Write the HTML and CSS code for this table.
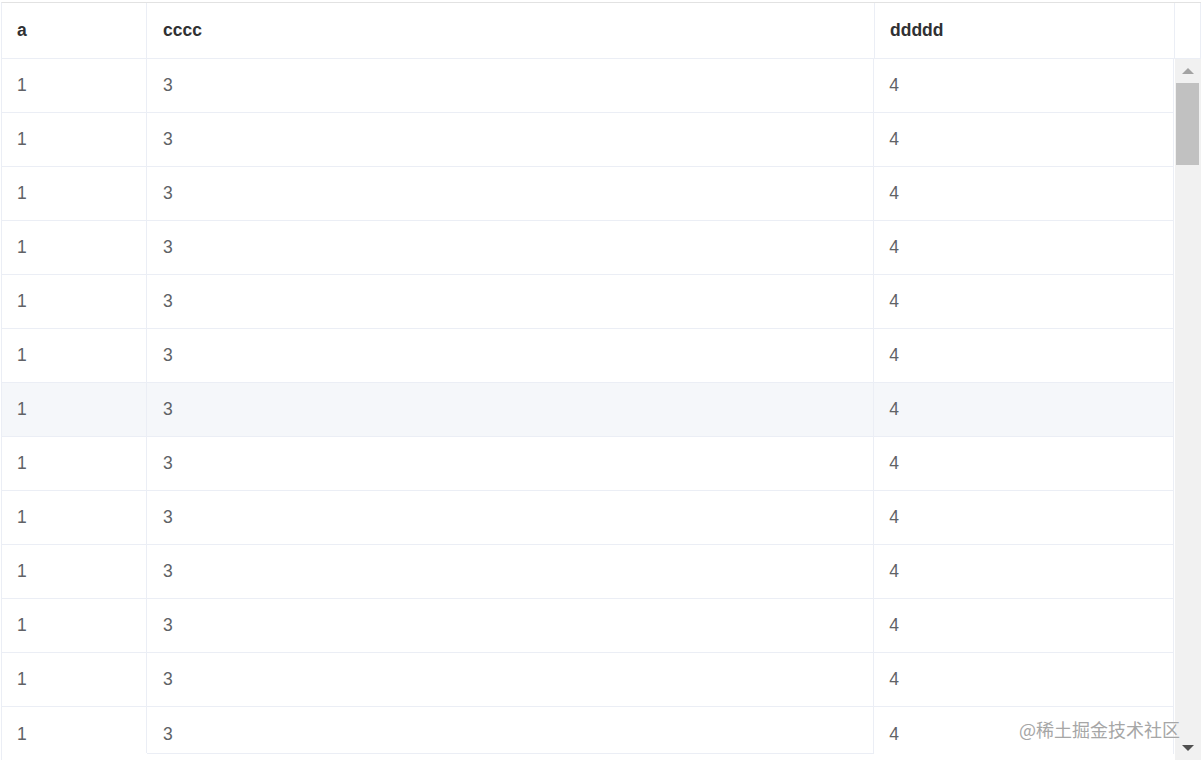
FILE: index.html
```html
<!DOCTYPE html>
<html lang="zh-CN">
<head>
  <meta charset="UTF-8">
  <title>Table</title>
  <link rel="stylesheet" href="styles.css">
</head>
<body>
  <div class="table">
    <div class="thead">
      <div class="th col-a">a</div>
      <div class="th col-c">cccc</div>
      <div class="th col-d">ddddd</div>
      <div class="th gutter"></div>
    </div>
    <div class="tbody-wrap">
      <div id="rows" class="rows"></div>
      <div class="scrollbar">
        <div class="sb-btn"><span class="arrow-up"></span></div>
        <div class="sb-track"><div class="sb-thumb"></div></div>
        <div class="sb-btn"><span class="arrow-down"></span></div>
      </div>
    </div>
  </div>
  <div class="watermark">@稀土掘金技术社区</div>
  <script>
    var html = '';
    for (var i = 0; i < 13; i++) {
      var cls = i === 6 ? 'tr hover' : 'tr';
      html += '<div class="' + cls + '"><div class="td col-a">1</div><div class="td col-c">3</div><div class="td col-d">4</div></div>';
    }
    document.getElementById('rows').innerHTML = html;
  </script>
</body>
</html>
```

FILE: styles.css
```css
html, body { margin: 0; background: #fff; overflow: hidden; }
body {
  font-family: "Liberation Sans", Arial, sans-serif;
  font-size: 17.5px;
  height: 760px;
}
.table {
  margin: 2px 0 0 1px;
  width: 1200px;
  border-top: 1px solid #e2e2e2;
  border-left: 1px solid #ebeef5;
  box-sizing: border-box;
}
.thead, .tr { display: flex; }
.th, .td {
  box-sizing: border-box;
  border-right: 1px solid #ebeef5;
  border-bottom: 1px solid #ebeef5;
  display: flex;
  align-items: center;
  padding-left: 15px;
}
.th { height: 56px; color: #303133; font-weight: bold; }
.td { height: 54px; color: #606266; }
.col-a { width: 145px; }
.col-c { width: 728px; padding-left: 16px; }
.col-d { width: 300px; }
.gutter { width: 26px; padding: 0; }
.tr.hover .td { background: #f5f7fa; }
.tbody-wrap {
  display: flex;
  height: 701px;
}
.rows {
  width: 1173px;
  overflow: hidden;
}
.rows .tr:last-child .td {
  height: 47px;
  align-items: flex-start;
  padding-top: 17px;
  border-bottom: none;
}
.rows .tr:last-child .col-a { height: 46px; }
.rows .tr:last-child .col-c { border-bottom: 1px solid #ebeef5; }
.scrollbar {
  width: 26px;
  background: #f1f1f1;
  display: flex;
  flex-direction: column;
  margin-left: 1px;
}
.sb-btn {
  height: 24px;
  display: flex;
  align-items: center;
  justify-content: center;
}
.arrow-up, .arrow-down {
  width: 0; height: 0;
  border-left: 6px solid transparent;
  border-right: 6px solid transparent;
}
.arrow-up { border-bottom: 6px solid #a3a3a3; }
.arrow-down { border-top: 6px solid #505050; }
.sb-track { flex: 1; padding: 0 2px 0 1px; }
.sb-thumb { height: 82px; background: #c1c1c1; }
.watermark {
  position: absolute;
  left: 1019px;
  top: 716px;
  font-family: "Noto Sans CJK SC", sans-serif;
  font-size: 18px;
  color: #a6a6a6;
  text-shadow: 0 0 1px #fff;
}
```
